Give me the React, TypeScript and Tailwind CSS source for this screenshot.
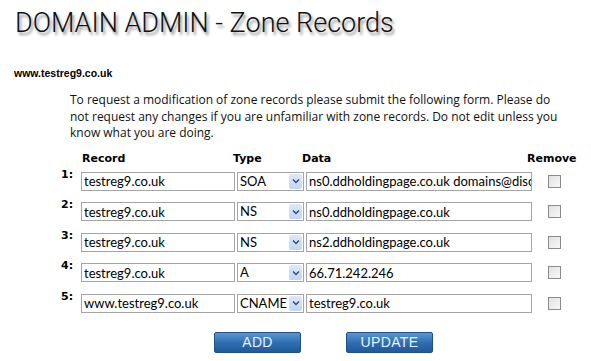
const records = [
  { n: "1:", name: "testreg9.co.uk", type: "SOA", data: "ns0.ddholdingpage.co.uk domains@discountdomains.co.uk" },
  { n: "2:", name: "testreg9.co.uk", type: "NS", data: "ns0.ddholdingpage.co.uk" },
  { n: "3:", name: "testreg9.co.uk", type: "NS", data: "ns2.ddholdingpage.co.uk" },
  { n: "4:", name: "testreg9.co.uk", type: "A", data: "66.71.242.246" },
  { n: "5:", name: "www.testreg9.co.uk", type: "CNAME", data: "testreg9.co.uk" },
];

function FakeSelect({ value }: { value: string }) {
  return (
    <div className="flex h-[19px] w-[67px] items-stretch border border-[#a5a5a5] bg-white">
      <span className="flex-1 overflow-hidden whitespace-nowrap pl-[2px] text-[13px] leading-[17px] text-black">{value}</span>
      <span className="m-[1px] flex w-[13px] items-center justify-center rounded-[2px] bg-gradient-to-b from-[#dde9f7] to-[#c2d6ef]">
        <svg width="8" height="6" viewBox="0 0 8 6">
          <path d="M1 1.5 L4 4.5 L7 1.5" fill="none" stroke="#2c4f86" strokeWidth="1.5" />
        </svg>
      </span>
    </div>
  );
}

function Btn({ label }: { label: string }) {
  return (
    <button className="h-[21px] w-[87px] rounded-[2px] border border-[#1f4f85] bg-gradient-to-b from-[#5a96d2] via-[#2f6fb1] to-[#1f5a99] text-[14px] leading-[19px] tracking-wide text-[#e8f1fb] [font-family:'Liberation_Sans',Arial,sans-serif]">
      {label}
    </button>
  );
}

export default function App() {
  return (
    <div className="h-[361px] w-[591px] overflow-hidden bg-white text-black [font-family:'Open_Sans',sans-serif]">
      {/* Page title */}
      <h1 className="pl-[15px] pt-[6px] text-[27px] font-light leading-[34px] text-[#111] [font-family:'Roboto',sans-serif] [text-shadow:2px_3px_3px_#8f8f8f]">
        DOMAIN ADMIN - Zone Records
      </h1>

      <div className="mt-[27px] pl-[14px] text-[10.5px] font-bold leading-[12px] [font-family:'Liberation_Sans',Arial,sans-serif]">
        www.testreg9.co.uk
      </div>

      <p className="mt-[13px] w-[565px] pl-[70px] text-[12px] leading-[16.5px] text-[#111]">
        To request a modification of zone records please submit the following form. Please do not request any changes if you are unfamiliar with zone records. Do not edit unless you know what you are doing.
      </p>

      {/* Records table */}
      <div className="mt-[10px] pl-[61px]">
        <div className="flex text-[11px] font-bold leading-[14px] [font-family:'DejaVu_Sans',sans-serif]">
          <span className="ml-[21px] w-[151px]">Record</span>
          <span className="w-[69px]">Type</span>
          <span className="w-[225px]">Data</span>
          <span>Remove</span>
        </div>

        <div className="mt-[4px] flex flex-col gap-[9.5px]">
          {records.map((r) => (
            <div key={r.n} className="flex items-start">
              <span className="w-[20px] text-[11px] font-bold leading-[10px] [font-family:'DejaVu_Sans',sans-serif]">{r.n}</span>
              <div className="mt-[2px] flex items-center gap-[2px] [font-family:'Lato',sans-serif]">
                <input
                  readOnly
                  defaultValue={r.name}
                  className="h-[19px] w-[154px] border border-[#a5a5a5] pl-[2px] text-[13px] leading-[17px] outline-none"
                />
                <FakeSelect value={r.type} />
                <input
                  readOnly
                  defaultValue={r.data}
                  className="h-[19px] w-[226px] border border-[#a5a5a5] pl-[2px] text-[13px] leading-[17px] outline-none"
                />
                <div className="ml-[14px] h-[13px] w-[13px] border border-[#8a8a8a] bg-gradient-to-br from-[#e2e2e2] to-[#f8f8f8]" />
              </div>
            </div>
          ))}
        </div>
      </div>

      <div className="mt-[19px] flex gap-[45px] pl-[214px]">
        <Btn label="ADD" />
        <Btn label="UPDATE" />
      </div>
    </div>
  );
}
